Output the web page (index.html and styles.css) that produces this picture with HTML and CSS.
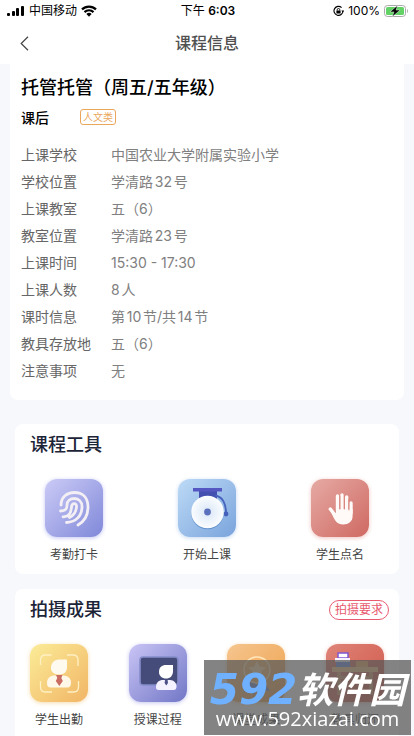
FILE: index.html
```html
<!DOCTYPE html>
<html lang="zh-CN">
<head>
    <meta charset="UTF-8">
    <meta name="viewport" content="width=device-width, initial-scale=1.0">
    <title>课程信息</title>
    <link rel="stylesheet" href="styles.css">
</head>
<body>
    <header class="top">
        <div class="status-bar">
            <div class="status-left">
                <svg width="18" height="12" viewBox="0 0 18 12">
                    <rect x="0" y="8" width="3" height="3" rx="1"/>
                    <rect x="5" y="6" width="3" height="5" rx="1"/>
                    <rect x="9" y="3" width="3" height="8" rx="1"/>
                    <rect x="14" y="1" width="3" height="10" rx="1"/>
                </svg>
                <span>中国移动</span>
                <svg width="16" height="12" viewBox="0 0 16 12">
                    <path d="M1 4.4a10 10 0 0 1 14 0M3.5 7.1a6.4 6.4 0 0 1 9 0" fill="none" stroke="#000" stroke-width="2.2"/>
                    <path d="M5.4 9.1a3.7 3.7 0 0 1 5.2 0L8 11.8z"/>
                </svg>
            </div>
            <div class="status-time">下午 <b>6:03</b></div>
            <div class="status-right">
                <svg width="11" height="12" viewBox="0 0 11 12">
                    <path d="M8.6 2.6A4.500 4.500 0 1 0 10 6" fill="none" stroke="#000" stroke-width="1.1"/>
                    <path d="M8.300 5.400h3L9.800 7.500z"/>
                    <rect x="3.400" y="5.400" width="4.200" height="3.200" rx=".5"/>
                    <path d="M4.200 5.600V4.800a1.300 1.300 0 0 1 2.600 0v.8" fill="none" stroke="#000" stroke-width=".9"/>
                </svg>
                <span>100%</span>
                <svg width="25" height="12" viewBox="0 0 25 12">
                    <rect x=".5" y=".5" width="21" height="11" rx="3" fill="#fff" stroke="#a9a9a9"/>
                    <rect x="2" y="2" width="18" height="8" rx="1.6" fill="#62d266"/>
                    <path d="M23 4v4c1.300-.5 1.300-3.500 0-4z" fill="#a9a9a9"/>
                    <path d="M13.500.4 6 6.900h4L8.300 11.800 16 5.100h-4z" stroke="#fff" stroke-width=".4"/>
                </svg>
            </div>
        </div>
        <nav class="nav-bar">
            <button class="back" aria-label="返回">
                <svg width="9" height="15" viewBox="0 0 9 15"><path d="M8 .8 1.200 7.500 8 14.200" fill="none" stroke="#444" stroke-width="1.200"/></svg>
            </button>
            <h1>课程信息</h1>
        </nav>
    </header>

    <main>
        <section class="info-card">
            <h2>托管托管（周五/五年级）</h2>
            <div class="sub-title">
                <strong>课后</strong>
                <span class="tag">人文类</span>
            </div>
            <dl class="info-list">
                <dt>上课学校</dt><dd>中国农业大学附属实验小学</dd>
                <dt>学校位置</dt><dd>学清路32号</dd>
                <dt>上课教室</dt><dd>五（6）</dd>
                <dt>教室位置</dt><dd>学清路23号</dd>
                <dt>上课时间</dt><dd>15:30 - 17:30</dd>
                <dt>上课人数</dt><dd>8人</dd>
                <dt>课时信息</dt><dd>第10节/共14节</dd>
                <dt>教具存放地</dt><dd>五（6）</dd>
                <dt>注意事项</dt><dd>无</dd>
            </dl>
        </section>

        <section class="card">
            <div class="card-head">
                <h2>课程工具</h2>
            </div>
            <div class="tiles tools">
                <button class="tile">
                    <span class="tile-icon purple">
                        <svg viewBox="0 0 58 58" fill="none" stroke="#f3eff5" stroke-width="2.800" stroke-linecap="round">
                            <path d="M16 26C16 18 22 13.500 29.500 13.500S43 18 43 28c0 8-3 14-10 18"/>
                            <path d="M15.500 32c6 0 6.500-3 6.500-6 0-4.500 3.500-6.500 7.500-6.500s7.500 3 7.500 8C37 37 31 43 21.500 43.500"/>
                            <path d="M18 37.800C25 38 26 33 26.500 28c.4-4.500 5.500-4.500 5 0-.4 5-3 8.500-7 10.500"/>
                        </svg>
                    </span>
                    <span class="tile-name">考勤打卡</span>
                </button>
                <button class="tile">
                    <span class="tile-icon blue">
                        <svg viewBox="0 0 58 58">
                            <defs>
                                <radialGradient id="bell"><stop offset=".3" stop-color="#e3edf9"/><stop offset="1" stop-color="#fbfdff"/></radialGradient>
                            </defs>
                            <path d="M21 12h18v8H21z" fill="#4450b0"/>
                            <path d="M15 9h29v3.500H15z" fill="#5457c2"/>
                            <path d="M37 16.500c8 1 11 9 11 17" fill="none" stroke="#4762bb" stroke-width="1.800"/>
                            <circle cx="48" cy="35" r="2.400" fill="#4560bb"/>
                            <circle cx="29.500" cy="34" r="16.300" fill="#5f8fcd"/>
                            <circle cx="29.500" cy="33" r="16.300" fill="url(#bell)"/>
                            <circle cx="29.500" cy="33" r="3.400" fill="#5b70bd"/>
                        </svg>
                    </span>
                    <span class="tile-name">开始上课</span>
                </button>
                <button class="tile">
                    <span class="tile-icon red">
                        <svg viewBox="0 0 58 58">
                            <g fill="#fffaf7" stroke="#fffaf7" stroke-width="3.400" stroke-linecap="round">
                                <path d="M26.500 32V17M31 31V16M35.700 32V18M40 34V24"/>
                                <path d="M19.300 30l4.700 6"/>
                                <path d="M25 30h16.600v7c0 5.500-4 8.500-9.500 8.500-6 0-8-3-12.600-13.500l5.500 2z" stroke="none"/>
                            </g>
                            <path d="M28.800 17v13M33.400 17v13M37.900 20v11" stroke="#d98880" stroke-width="1" stroke-linecap="round"/>
                        </svg>
                    </span>
                    <span class="tile-name">学生点名</span>
                </button>
            </div>
        </section>

        <section class="card last">
            <div class="card-head">
                <h2>拍摄成果</h2>
                <button class="require">拍摄要求</button>
            </div>
            <div class="tiles">
                <button class="tile">
                    <span class="tile-icon yellow">
                        <svg viewBox="0 0 58 58">
                            <path d="M10.500 21v-5q0-5 5-5h6M37 11h6q5 0 5 5v6M48.500 37v6q0 5-5 5h-6M22 48h-6.500q-5 0-5-5v-6" fill="none" stroke="#fff0c4" stroke-width="1.300"/>
                            <path d="M21 24c0-6 4-8.500 9-8.500h7V23c0 5-3 7.500-8 7.500S21 28 21 24z" fill="#fffaf0"/>
                            <path d="M17 39c0-5 3-7.500 8-7.500h8c5 0 8 3 8 7 0 3-1 5-4 5H21c-3 0-4-1.500-4-4.500z" fill="#fff7e8"/>
                            <path d="M26 31h6.500l-1.200 3 1.500 3-3.500 5-3.500-5 1.500-3z" fill="#ca6c62"/>
                        </svg>
                    </span>
                    <span class="tile-name">学生出勤</span>
                </button>
                <button class="tile">
                    <span class="tile-icon violet">
                        <svg viewBox="0 0 58 58">
                            <rect x="11" y="13" width="38" height="28" rx="3" fill="#464c79" stroke="#858dca" stroke-width="1.600"/>
                            <path d="M30 28c0-5 3-7 7-7h7v6c0 5-3 7.500-7 7.500s-7-2.500-7-6.500z" fill="#fff"/>
                            <path d="M27 43c0-4.500 3-7 7-7h7c4 0 6.500 3 6.500 6.500 0 2.500-1 3.500-3 3.500h-15c-1.800 0-2.500-1-2.500-3z" fill="#f4f2ff"/>
                            <path d="M36 36h2.600l.4 3-1.700 2.500L35.600 39z" fill="#4c5285"/>
                        </svg>
                    </span>
                    <span class="tile-name">授课过程</span>
                </button>
                <button class="tile">
                    <span class="tile-icon orange">
                        <svg viewBox="0 0 58 58">
                            <path d="M22 37l-5 11 6-2 4 5 4-12zM36 37l7 10-6-1-3 5-5-12z" fill="#6f8fdd"/>
                            <circle cx="30" cy="26" r="13" fill="#f7b771" stroke="#ffe7bd" stroke-width="1.500"/>
                            <path d="M30 17l2.700 5.600 6.100.8-4.500 4.200 1.100 6.100-5.400-3-5.400 3 1.100-6.100-4.500-4.200 6.100-.8z" fill="#ffdfad"/>
                        </svg>
                    </span>
                    <span class="tile-name">课堂成果</span>
                </button>
                <button class="tile">
                    <span class="tile-icon coral">
                        <svg viewBox="0 0 58 58">
                            <path d="M12 9h10v5H12z" fill="#fff" stroke="#8058d2" stroke-width="1.500"/>
                            <path d="M9 14h15v4H9z" fill="#f8f1ff"/>
                            <path d="M10 18h14v5H10z" fill="#6d8fe8"/>
                            <path d="M30 17h12v6H30z" fill="#efaf66"/>
                            <path d="M6 23h46v5H6z" fill="#f6c98c"/>
                            <path d="M11 28h4v23h-4zM43 28h4v23h-4zM15 32h28v3H15z" fill="#dca079"/>
                        </svg>
                    </span>
                    <span class="tile-name">教具归还</span>
                </button>
            </div>
        </section>
    </main>

    <aside class="watermark">
        <div class="mark-name"><span class="mark-num">592</span><span>软件园</span></div>
        <div class="mark-url">www.592xiazai.com</div>
    </aside>
</body>
</html>
```

FILE: styles.css
```css
* {
    box-sizing: border-box;
}

body {
    margin: 0;
    min-height: 100vh;
    display: flex;
    flex-direction: column;
    background-color: #f7f8fb;
    color: #000;
    font-family: Inter, "Noto Sans CJK SC", sans-serif;
    text-autospace: normal;
}

h1, h2, dl, dd {
    margin: 0;
}

button {
    padding: 0;
    border: none;
    background: none;
    color: inherit;
    font-family: inherit;
    cursor: pointer;
}

svg {
    display: block;
}

/* status bar and title */
.top {
    background-color: #fff;
}

.status-bar {
    display: grid;
    grid-template-columns: 1fr auto 1fr;
    align-items: center;
    height: 22px;
    padding: 0 5px 0 7px;
    font-size: 12px;
    line-height: 20px;
}

.status-left,
.status-right {
    display: flex;
    align-items: center;
    gap: 4px;
}

.status-right {
    justify-content: flex-end;
}

.status-time b {
    font-weight: 600;
}

.nav-bar {
    display: grid;
    grid-template-columns: 40px 1fr 40px;
    align-items: center;
    height: 42px;
}

.back {
    display: flex;
    align-items: center;
    height: 42px;
    padding-left: 20px;
}

.nav-bar h1 {
    color: #505050;
    font-size: 16px;
    font-weight: 500;
    line-height: 24px;
    text-align: center;
}

main {
    flex: 1;
    display: flex;
    flex-direction: column;
}

/* course info */
.info-card {
    margin: 0 10px 24px;
    padding: 10px 11px 16px;
    background-color: #fff;
    border-radius: 0 0 8px 8px;
}

.info-card h2 {
    font-size: 18px;
    font-weight: 500;
    line-height: 28px;
}

.sub-title {
    display: flex;
    align-items: center;
    gap: 31px;
    height: 29px;
    margin-bottom: 10px;
    font-size: 14px;
}

.sub-title strong {
    font-weight: 500;
}

.tag {
    padding: 0 2px;
    border: 1px solid #eaa75c;
    border-radius: 3px;
    color: #eaa75c;
    font-size: 10px;
    line-height: 14px;
}

.info-list {
    display: grid;
    grid-template-columns: 90px 1fr;
    font-size: 14px;
    line-height: 27px;
}

.info-list dt {
    color: #666;
}

.info-list dd {
    color: #808080;
}

/* cards with icon tiles */
.card {
    margin: 0 15px 15px;
    padding: 11px 15px 10px;
    background-color: #fff;
    border-radius: 8px;
}

.card.last {
    flex: 1;
    margin-bottom: 0;
    padding-bottom: 0;
    border-radius: 8px 8px 0 0;
}

.card-head {
    display: flex;
    justify-content: space-between;
    align-items: center;
    height: 20px;
    margin-bottom: 24px;
}

.card-head h2 {
    color: #1c2438;
    font-size: 18px;
    font-weight: 500;
    line-height: 20px;
}

.require {
    height: 20px;
    margin-right: -5px;
    padding: 0 5px;
    border: 1px solid #e85b70;
    border-radius: 10px;
    color: #e85b70;
    font-size: 12px;
    line-height: 18px;
}

.tiles {
    display: flex;
    justify-content: space-between;
}

.tools {
    padding: 0 15px;
}

.tile {
    display: flex;
    flex-direction: column;
    align-items: center;
    gap: 9px;
    width: 58px;
}

.tile-icon {
    width: 58px;
    height: 58px;
    border-radius: 12px;
}

.tile-name {
    color: #444;
    font-size: 12px;
    line-height: 18px;
    white-space: nowrap;
}

.purple {
    background: linear-gradient(135deg, #cbcbf6, #8088d9);
    box-shadow: 0 1px 4px #c3c7f3;
}

.blue {
    background: linear-gradient(135deg, #bddaf6, #7aa4dc);
    box-shadow: 0 1px 4px #c5d9f2;
}

.red {
    background: linear-gradient(135deg, #e6aaa4, #cf6962);
    box-shadow: 0 1px 4px #eec3bf;
}

.yellow {
    background: linear-gradient(135deg, #fbec98, #f1b565);
    box-shadow: 0 1px 4px #f6ddaf;
}

.violet {
    background: linear-gradient(135deg, #cac5f6, #7176c6);
    box-shadow: 0 1px 4px #c6c7ef;
}

.orange {
    background: linear-gradient(135deg, #f6c58e, #eda24e);
    box-shadow: 0 1px 4px #f4d5ae;
}

.coral {
    background: linear-gradient(135deg, #df8478, #cf5748);
    box-shadow: 0 1px 4px #efc0ba;
}

/* site mark laid over the corner */
.watermark {
    position: fixed;
    right: 3px;
    bottom: 1px;
    width: 207px;
    height: 75px;
    padding-top: 12px;
    background-color: rgba(90, 90, 90, 0.75);
    color: #fff;
    text-align: center;
}

.mark-name {
    display: flex;
    justify-content: center;
    align-items: center;
    height: 36px;
    font-size: 36px;
    font-style: italic;
    font-weight: 700;
    line-height: 36px;
}

.mark-num {
    color: #6fb0ff;
    font-family: "DejaVu Sans", sans-serif;
    font-size: 42px;
}

.mark-url {
    font-family: "Open Sans", sans-serif;
    font-size: 20px;
    font-weight: 500;
    line-height: 22px;
}
```
